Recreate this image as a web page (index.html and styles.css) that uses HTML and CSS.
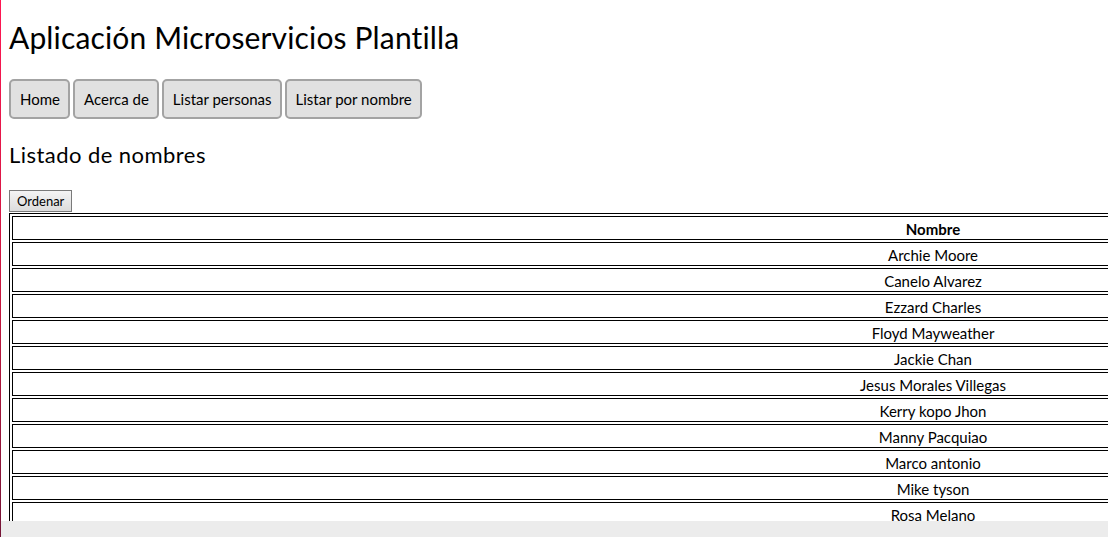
FILE: index.html
```html
<!DOCTYPE html>
<html lang="es">
<head>
<meta charset="utf-8">
<title>Aplicación Microservicios Plantilla</title>
<link rel="stylesheet" href="styles.css">
</head>
<body>
<div class="edge"></div>
<main class="page">
  <h1 class="title">Aplicación Microservicios Plantilla</h1>
  <nav class="nav">
    <button class="nav-btn">Home</button>
    <button class="nav-btn">Acerca de</button>
    <button class="nav-btn">Listar personas</button>
    <button class="nav-btn">Listar por nombre</button>
  </nav>
  <h2 class="subtitle">Listado de nombres</h2>
  <button class="sort-btn">Ordenar</button>
  <table class="names">
    <thead>
      <tr><th>Nombre</th></tr>
    </thead>
    <tbody>
      <tr><td>Archie Moore</td></tr>
      <tr><td>Canelo Alvarez</td></tr>
      <tr><td>Ezzard Charles</td></tr>
      <tr><td>Floyd Mayweather</td></tr>
      <tr><td>Jackie Chan</td></tr>
      <tr><td>Jesus Morales Villegas</td></tr>
      <tr><td>Kerry kopo Jhon</td></tr>
      <tr><td>Manny Pacquiao</td></tr>
      <tr><td>Marco antonio</td></tr>
      <tr><td>Mike tyson</td></tr>
      <tr><td>Rosa Melano</td></tr>
    </tbody>
  </table>
</main>
<div class="hscroll"></div>
</body>
</html>
```

FILE: styles.css
```css
html, body {
  margin: 0;
  padding: 0;
  overflow: hidden;
  background: #fff;
}

body {
  font-family: Lato, "Liberation Sans", sans-serif;
  font-size: 15px;
  color: #000;
}

.edge {
  position: fixed;
  left: 0;
  top: 0;
  bottom: 0;
  width: 1px;
  background: linear-gradient(#ff1652, #c8173f 55%, #741436);
  z-index: 2;
}

.hscroll {
  position: fixed;
  left: 1px;
  right: 0;
  bottom: 0;
  height: 16px;
  background: #ececec;
  z-index: 1;
}

.page {
  padding: 0 0 0 9px;
}

.title {
  margin: 17px 0 0;
  font-size: 30px;
  line-height: 40px;
  font-weight: 400;
  letter-spacing: 0.15px;
}

.nav {
  display: flex;
  gap: 3px;
  margin-top: 22px;
}

.nav-btn {
  font-family: inherit;
  font-size: 15px;
  line-height: 20px;
  color: #000;
  background: #e1e1e1;
  border: 2px solid #a3a3a3;
  border-radius: 5px;
  padding: 8px 8px 8px 9px;
}

.subtitle {
  margin: 21px 0 0;
  font-size: 22px;
  line-height: 30px;
  font-weight: 400;
  letter-spacing: 0.45px;
}

.sort-btn {
  display: block;
  margin-top: 20px;
  font-family: inherit;
  font-size: 13px;
  line-height: 18px;
  padding: 1px 7px;
  color: #000;
  border: 1px solid #7a7a7a;
  border-radius: 0;
  background: linear-gradient(#f4f4f4, #dcdcdc);
}

.names {
  width: 1848px;
  margin-top: 1px;
  border: 1px solid #000;
  border-spacing: 2px;
}

.names th,
.names td {
  border: 1px solid #000;
  padding: 2px 1px 0;
  line-height: 20px;
  font-size: 15px;
  text-align: center;
}

.names th {
  font-weight: 700;
}
```
